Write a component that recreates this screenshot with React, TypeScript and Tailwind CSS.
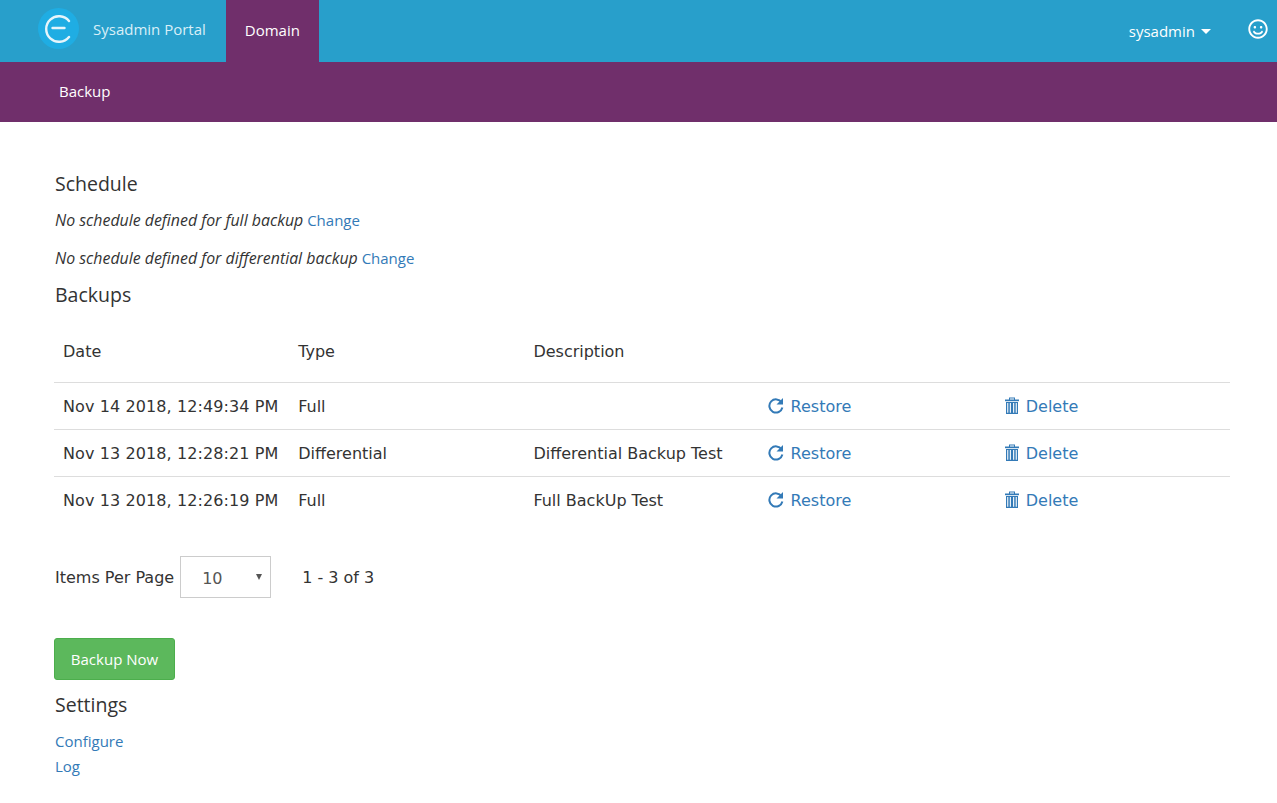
import { FaRegSmile } from 'react-icons/fa';

const rows = [
  { date: 'Nov 14 2018, 12:49:34 PM', type: 'Full', description: '' },
  { date: 'Nov 13 2018, 12:28:21 PM', type: 'Differential', description: 'Differential Backup Test' },
  { date: 'Nov 13 2018, 12:26:19 PM', type: 'Full', description: 'Full BackUp Test' },
];

function RestoreIcon() {
  return (
    <svg viewBox="0 0 16 17" className="h-[17px] w-[16px]" fill="none">
      <path d="M13.600 5.500A6.600 6.600 0 1 0 14.400 10.500" stroke="currentColor" strokeWidth="2" />
      <path d="M15 1v6.500H8.500z" fill="currentColor" />
    </svg>
  );
}

function TrashIcon() {
  return (
    <svg viewBox="0 0 14 17" className="ml-[2px] mb-[1px] h-[17px] w-[14px]" fill="currentColor">
      <path d="M4 3V.5h6V3H9V1.500H5V3z" />
      <path d="M0 2.500h14V4.200H0z" />
      <path d="M1 5h12v12H1zM2.200 6v9.800h1.100V6zM4.800 6v9.800h1.100V6zM8.100 6v9.800h1.100V6zM10.700 6v9.800h1.100V6z" fillRule="evenodd" />
    </svg>
  );
}

function Logo() {
  return (
    <div className="flex h-[41px] w-[41px] items-center justify-center rounded-full bg-[#1fade3]">
      <svg viewBox="0 0 28 28" className="h-[28px] w-[28px]" fill="none" stroke="#e6f5fb" strokeWidth="2.400" strokeLinecap="round">
        <path d="M24 6A12.800 12.800 0 1 0 24 22" />
        <path d="M7.500 13h12" />
      </svg>
    </div>
  );
}

function Heading({ children }: { children: React.ReactNode }) {
  return <h4 className="ml-[1px] font-['Open_Sans',sans-serif] text-[19.500px] leading-[21px] text-[#333]">{children}</h4>;
}

export default function App() {
  return (
    <div className="min-h-screen bg-white font-['DejaVu_Sans',sans-serif] text-[16px] text-[#333]">
      <header className="flex h-[62px] items-stretch bg-[#289fcb] pl-[38px] pr-[9px] font-['Open_Sans',sans-serif]">
        <div className="flex h-[57px] items-center">
          <Logo />
        </div>
        <span className="ml-[14px] mt-[19px] text-[15px] leading-[20px] text-[#d9eff8]">Sysadmin Portal</span>
        <a className="ml-[20px] flex w-[93px] items-center justify-center bg-[#702f6b] pb-[2px] text-[15px] text-white">Domain</a>
        <div className="ml-auto flex items-center text-white">
          <span className="text-[15px]">sysadmin</span>
          <span className="ml-[6px] h-0 w-0 border-x-[5px] border-t-[5px] border-x-transparent border-t-white" />
          <FaRegSmile className="ml-[37px] mb-[4px] h-[20px] w-[20px]" />
        </div>
      </header>
      <nav className="flex h-[60px] items-center bg-[#702f6b] pb-[2px] pl-[59px] font-['Open_Sans',sans-serif] text-[15px] font-medium text-white">
        Backup
      </nav>

      <main className="pl-[54px] pr-[47px] pt-[51px]">
        <Heading>Schedule</Heading>
        <p className="ml-[1px] mt-[16px] font-['Open_Sans',sans-serif] text-[15px] leading-[21px]">
          <em className="text-[15.900px]">No schedule defined for full backup</em> <a className="text-[#337ab7]">Change</a>
        </p>
        <p className="ml-[1px] mt-[17px] font-['Open_Sans',sans-serif] text-[15px] leading-[21px]">
          <em className="text-[15.900px]">No schedule defined for differential backup</em> <a className="text-[#337ab7]">Change</a>
        </p>
        <div className="mt-[15px]">
          <Heading>Backups</Heading>
        </div>

        <table className="mt-[16px] w-full table-fixed border-collapse">
          <thead>
            <tr className="h-[61px] border-b border-[#ddd]">
              <th className="pl-[9px] pt-[2px] text-left font-normal">Date</th>
              <th className="pl-[9px] pt-[2px] text-left font-normal">Type</th>
              <th className="pl-[9px] pt-[2px] text-left font-normal">Description</th>
              <th />
              <th />
            </tr>
          </thead>
          <tbody>
            {rows.map((row) => (
              <tr key={row.date} className="h-[47px] border-b border-[#ddd] last:border-b-0">
                <td className="pl-[9px] pt-[2px] tracking-[0.1px] whitespace-nowrap">{row.date}</td>
                <td className="pl-[9px] pt-[2px]">{row.type}</td>
                <td className="pl-[9px] pt-[2px]">{row.description}</td>
                <td className="px-[8px] text-[#337ab7]">
                  <span className="flex items-center gap-[7px]">
                    <RestoreIcon />
                    <a className="pt-[2px]">Restore</a>
                  </span>
                </td>
                <td className="px-[8px] text-[#337ab7]">
                  <span className="flex items-center gap-[7px]">
                    <TrashIcon />
                    <a className="pt-[2px]">Delete</a>
                  </span>
                </td>
              </tr>
            ))}
          </tbody>
        </table>

        <div className="mt-[33px] flex items-center">
          <span className="ml-[1px] pt-[2px]">Items Per Page</span>
          <div className="relative ml-[6px] flex h-[42px] w-[91px] items-center border border-[#ccc] pl-[21px] pt-[4px] text-[#555]">
            10
            <span className="absolute right-[8px] top-[17px] h-0 w-0 border-x-[3.500px] border-t-[6px] border-x-transparent border-t-[#555]" />
          </div>
          <span className="ml-[31px] pt-[2px]">1 - 3 of 3</span>
        </div>

        <button className="mt-[40px] block h-[42px] w-[121px] rounded-[3px] border border-[#4cae4c] bg-[#5cb85c] font-['Open_Sans',sans-serif] text-[15px] text-white">
          Backup Now
        </button>

        <div className="mt-[14px]">
          <Heading>Settings</Heading>
        </div>
        <a className="ml-[1px] mt-[16px] block font-['Open_Sans',sans-serif] text-[15px] leading-[21px] text-[#337ab7]">Configure</a>
        <a className="ml-[1px] mt-[4px] block font-['Open_Sans',sans-serif] text-[15px] leading-[21px] text-[#337ab7]">Log</a>
      </main>
    </div>
  );
}
